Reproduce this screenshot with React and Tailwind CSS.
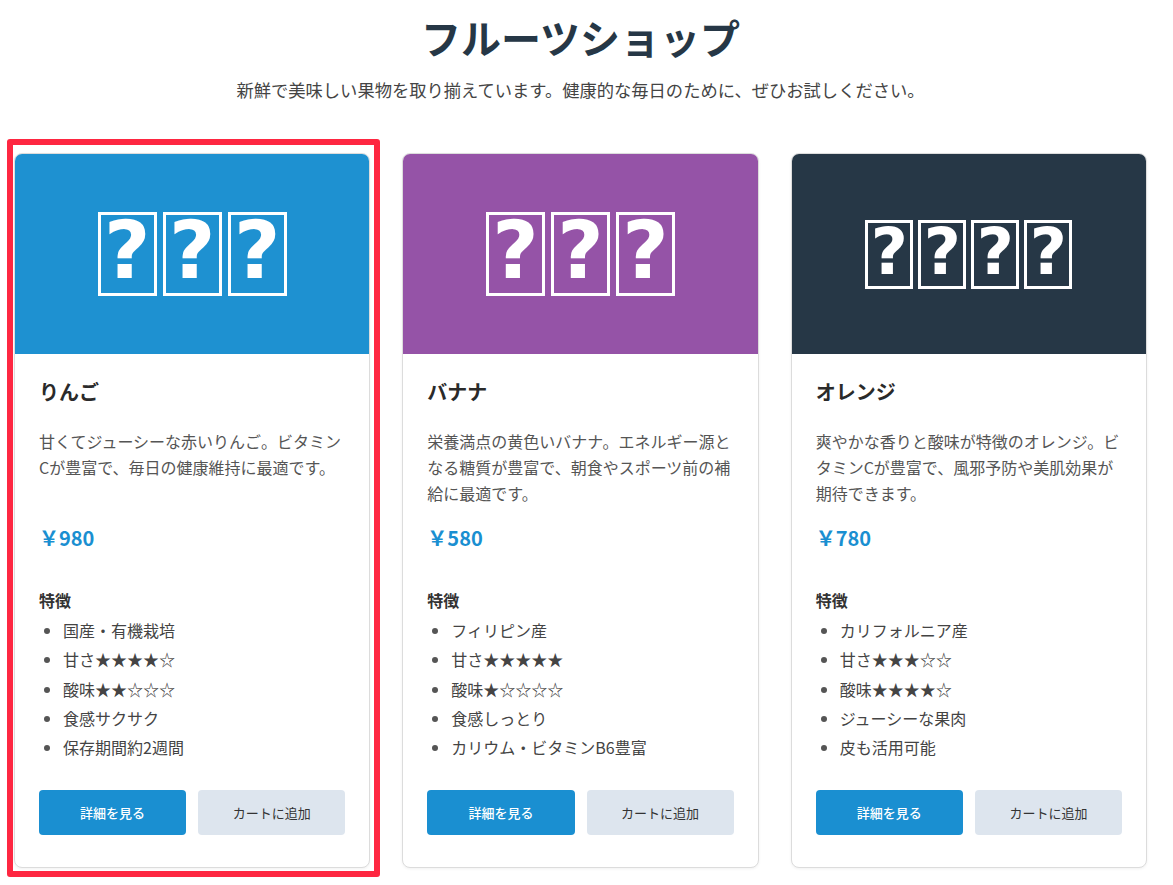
import React from "react";

const fruits = [
  {
    name: "りんご",
    bg: "bg-[#1e91d1]",
    count: 3,
    desc: "甘くてジューシーな赤いりんご。ビタミンCが豊富で、毎日の健康維持に最適です。",
    price: "￥980",
    features: ["国産・有機栽培", "甘さ★★★★☆", "酸味★★☆☆☆", "食感サクサク", "保存期間約2週間"],
    highlight: true,
  },
  {
    name: "バナナ",
    bg: "bg-[#9553a7]",
    count: 3,
    desc: "栄養満点の黄色いバナナ。エネルギー源となる糖質が豊富で、朝食やスポーツ前の補給に最適です。",
    price: "￥580",
    features: ["フィリピン産", "甘さ★★★★★", "酸味★☆☆☆☆", "食感しっとり", "カリウム・ビタミンB6豊富"],
  },
  {
    name: "オレンジ",
    bg: "bg-[#263746]",
    count: 4,
    desc: "爽やかな香りと酸味が特徴のオレンジ。ビタミンCが豊富で、風邪予防や美肌効果が期待できます。",
    price: "￥780",
    features: ["カリフォルニア産", "甘さ★★★☆☆", "酸味★★★★☆", "ジューシーな果肉", "皮も活用可能"],
  },
];

const font = { fontFamily: '"Noto Sans CJK JP", "Noto Sans", sans-serif' };

function Tofu({ small }) {
  return (
    <span
      className={
        small
          ? "flex h-[69px] w-[48px] items-center justify-center border-[3px] border-white text-[64px] font-extrabold leading-none text-white"
          : "flex h-[84px] w-[59px] items-center justify-center border-[3px] border-white text-[80px] font-extrabold leading-none text-white"
      }
      style={{ fontFamily: '"DejaVu Sans", sans-serif' }}
    >
      <span className={small ? "-mt-[4px]" : "-mt-[6px]"}>?</span>
    </span>
  );
}

function Card({ f }) {
  return (
    <div className="relative">
      <div className="flex h-[715px] flex-col overflow-hidden rounded-[8px] border border-[#dcdcdc] bg-white shadow-[0_1px_3px_rgba(0,0,0,0.06)]">
        <div className={`flex h-[200px] items-center justify-center ${f.bg}`}>
          <div className={f.count === 4 ? "flex gap-[5px]" : "flex gap-[6px]"}>
            {Array.from({ length: f.count }).map((_, i) => (
              <Tofu key={i} small={f.count === 4} />
            ))}
          </div>
        </div>
        <div className="flex flex-1 flex-col px-6 pt-6 pb-8">
          <h2 className="text-[20px] font-bold leading-[28px] text-[#2a2a2a]">{f.name}</h2>
          <p className="mt-[22px] min-h-[78px] text-[16px] leading-[26px] text-[#555]">{f.desc}</p>
          <div className="mt-[18px] text-[20px] font-bold leading-[28px] text-[#1a8fd1]">{f.price}</div>
          <h3 className="mt-[37px] text-[16px] font-bold leading-[22px] text-[#333]">特徴</h3>
          <ul className="mt-[5px] list-disc pl-6 text-[16px] leading-[29.25px] text-[#444] marker:text-[#555]">
            {f.features.map((t) => (
              <li key={t}>{t}</li>
            ))}
          </ul>
          <div className="mt-auto flex gap-3">
            <button className="h-[45px] flex-1 rounded-[4px] bg-[#1a8fd1] text-[13px] font-medium text-white">
              詳細を見る
            </button>
            <button className="h-[45px] flex-1 rounded-[4px] bg-[#dde5ee] text-[13px] text-[#333]">
              カートに追加
            </button>
          </div>
        </div>
      </div>
      {f.highlight && (
        <div className="pointer-events-none absolute -top-[14px] -left-[7px] -right-[10px] -bottom-[9px] rounded-[3px] border-[6px] border-[#fe2741]" />
      )}
    </div>
  );
}

export default function App() {
  return (
    <div className="min-h-screen w-[1161px] bg-white pb-10" style={font}>
      <h1 className="pt-[13px] text-center text-[40px] font-bold leading-[48px] text-[#263746]">
        フルーツショップ
      </h1>
      <p className="mt-[17px] text-center text-[17.3px] leading-[24px] text-[#444]">
        新鮮で美味しい果物を取り揃えています。健康的な毎日のために、ぜひお試しください。
      </p>
      <div className="mt-[51px] ml-[14px] grid w-[1133px] grid-cols-3 gap-8">
        {fruits.map((f) => (
          <Card key={f.name} f={f} />
        ))}
      </div>
    </div>
  );
}
